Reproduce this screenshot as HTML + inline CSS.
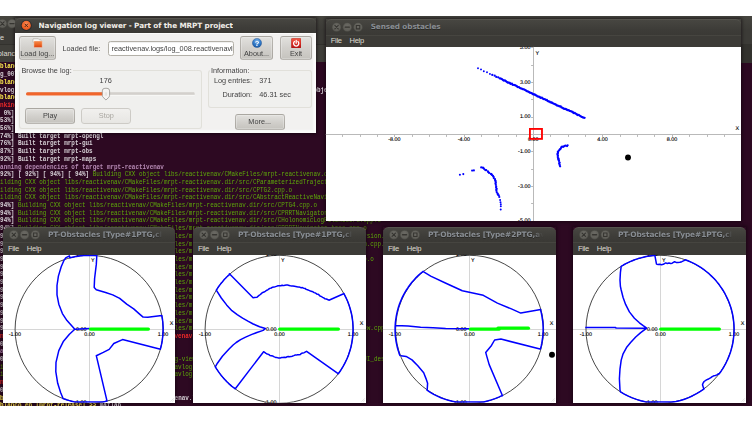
<!DOCTYPE html>
<html><head><meta charset="utf-8"><title>Navigation log viewer - Part of the MRPT project</title>
<style>
html,body{margin:0;padding:0;background:#fff}
body{width:752px;height:423px;overflow:hidden;position:relative;font-family:"Liberation Sans",sans-serif;font-size:7.3px;color:#424242}
#desk{position:absolute;left:0;top:16px;width:752px;height:389.8px;overflow:hidden;background:#2d0922}
#desk *{box-sizing:border-box}
#desk div,#desk span{position:absolute}
/* terminal */
#tterm{left:0;top:0;width:752px;height:46px;background:#3c3b37}
#tterm .t1{left:0;top:0;width:752px;height:14px;background:linear-gradient(#46453f,#3c3b37)}
#tterm .t3{left:0;top:28.2px;width:752px;height:17.8px;background:#403f3a;border-top:0.6px solid #33322e}
#tterm span{color:#dfdbd2;white-space:pre}
#term{left:-7.12px;top:0;width:1000px;height:389.8px;font-family:"Liberation Mono","DejaVu Sans Mono",monospace;font-size:7px;transform-origin:0 0;transform:scaleX(0.8475);white-space:pre}
#term .tl{left:0;height:7.7px;line-height:7.7px;white-space:pre}
#term .tl span{position:static}
.w{color:#d6d0d6;font-weight:bold}
.g{color:#5ea80a}
.y{color:#fce94f;font-weight:bold}
.r{color:#ef2929;font-weight:bold}
.m{color:#b68ab4;font-weight:bold}
.b{color:#729fcf;font-weight:bold}
/* windows */
.win{box-shadow:0 0 3px 1px rgba(10,0,8,.55)}
.tb{left:0;top:0;width:100%;border-radius:5.5px 5.5px 0 0;background:linear-gradient(#474641,#3d3c38 65%,#3a3935);border-top:0.7px solid #55544e}
.tb .tt{font-family:"DejaVu Sans","Liberation Sans",sans-serif;font-weight:bold;font-size:7.4px;letter-spacing:-0.08px;color:#dfdbd2;white-space:pre;overflow:hidden}
.tb.u .tt{color:#888d93;text-shadow:0 0.6px 0 rgba(20,20,18,.5)}
.mb{left:0;width:100%;background:#3c3b37;border-top:0.5px solid #464540}
.mb span{color:#dfdbd2;top:-0.8px;line-height:11px;white-space:pre;font-size:7.6px;letter-spacing:-0.3px}
.cv{left:0;width:100%;background:#fff;overflow:hidden}
.pl text{font-family:"Liberation Sans",sans-serif;font-size:5.4px;fill:#000;stroke:#000;stroke-width:0.12px;text-rendering:geometricPrecision}
/* main dialog */
#main{left:15px;top:1.7px;width:301px;height:115.3px}
#main .body{left:0;top:15.3px;width:301px;height:100px;background:#f2f1f0;border:2.2px solid #fbfbfa;border-top-width:1px;box-shadow:inset 1.2px 0 0 #f8f8f7,inset -1.2px 0 0 #f8f8f7,inset 0 -1.2px 0 #f8f8f7}
.btn{border:1px solid rgba(130,127,120,.42);border-radius:3px;background:linear-gradient(#e2e1de,#d2d0cc 50%,#c5c3be);box-shadow:inset 0 0 0 0.6px rgba(255,255,255,.45)}
.btn.dis{background:linear-gradient(#f1f0ee,#e7e6e3);border-color:#cdcbc6;color:#a9a6a0;box-shadow:none}
.btn span{left:0;width:100%;text-align:center;white-space:pre}
#main .bl{left:0;top:0;width:100%;height:100%;filter:blur(0.3px)}
.grp{border:1px solid rgba(214,211,205,.6);border-radius:3px;background:rgba(238,237,235,.35)}
.lbl{white-space:pre;line-height:9px;height:9px}
.glbl{background:#f2f1f0;padding:0 1px}
.entry{background:#fff;border:0.7px solid #b3b0a8;border-radius:2.4px;overflow:hidden;box-shadow:inset 0 0.6px 0.8px rgba(0,0,0,.12)}
</style></head>
<body>
<div id="desk">
<div id="tterm"><div class="t1"></div><span style="left:-7.6px;top:17px;line-height:9px">File</span><div class="t3"><div style="left:741px;top:0;width:11px;height:18px;background:#33322e"></div><span style="left:-5.5px;top:3.6px;line-height:9px">jlblanco@jlblanco-desktop: ~/code/mrpt-release</span></div></div>
<div id="term" style="top:0">
<div class="tl" style="top:47.45px"><span class="y">jlblanco en [mrpt-release] &gt;&gt; </span><span class="w">ls reactivenav.logs/</span></div>
<div class="tl" style="top:55.15px"><span class="w">log_007.reactivenavlog  log_008.reactivenavlog</span></div>
<div class="tl" style="top:62.85px"><span class="y">jlblanco en [mrpt-release] &gt;&gt; </span><span class="w">navlog-viewer reactivenav.logs/log_008.reactivenavlog</span></div>
<div class="tl" style="top:70.55px"><span class="w">navlog-viewer: error while loading shared libraries: libmrpt-gui.so.0: cannot open shared object file: No such file or directory</span></div>
<div class="tl" style="top:78.25px"><span class="y">jlblanco en [mrpt-release] &gt;&gt; </span><span class="w">make</span></div>
<div class="tl" style="top:85.95px"><span class="r">Linking CXX shared library ../../lib/libmrpt-base.so</span></div>
<div class="tl" style="top:93.65px"><span class="w">[  0%] Built target mrpt-base</span></div>
<div class="tl" style="top:101.35px"><span class="w">[ 53%] Built target mrpt-bayes</span></div>
<div class="tl" style="top:109.05px"><span class="w">[ 56%] Built target mrpt-scanmatching</span></div>
<div class="tl" style="top:116.75px"><span class="w">[ 74%] Built target mrpt-opengl</span></div>
<div class="tl" style="top:124.45px"><span class="w">[ 76%] Built target mrpt-gui</span></div>
<div class="tl" style="top:132.15px"><span class="w">[ 87%] Built target mrpt-obs</span></div>
<div class="tl" style="top:139.85px"><span class="w">[ 92%] Built target mrpt-maps</span></div>
<div class="tl" style="top:147.55px"><span class="m">Scanning dependencies of target mrpt-reactivenav</span></div>
<div class="tl" style="top:155.25px"><span class="w">[ 92%] [ 92%] [ 94%] [ 94%] </span><span class="g">Building CXX object libs/reactivenav/CMakeFiles/mrpt-reactivenav.dir/src/CLogFileRecord_ND.cpp.o</span></div>
<div class="tl" style="top:162.95px"><span class="g">Building CXX object libs/reactivenav/CMakeFiles/mrpt-reactivenav.dir/src/CParameterizedTrajectoryGenerator.cpp.o</span></div>
<div class="tl" style="top:170.65px"><span class="g">Building CXX object libs/reactivenav/CMakeFiles/mrpt-reactivenav.dir/src/CPTG2.cpp.o</span></div>
<div class="tl" style="top:178.35px"><span class="g">Building CXX object libs/reactivenav/CMakeFiles/mrpt-reactivenav.dir/src/CAbstractReactiveNavigationSystem.cpp.o</span></div>
<div class="tl" style="top:186.05px"><span class="w">[ 94%] </span><span class="g">Building CXX object libs/reactivenav/CMakeFiles/mrpt-reactivenav.dir/src/CPTG4.cpp.o</span></div>
<div class="tl" style="top:193.75px"><span class="w">[ 94%] </span><span class="g">Building CXX object libs/reactivenav/CMakeFiles/mrpt-reactivenav.dir/src/CPRRTNavigator.cpp.o</span></div>
<div class="tl" style="top:201.45px"><span class="w">[ 94%] </span><span class="g">Building CXX object libs/reactivenav/CMakeFiles/mrpt-reactivenav.dir/src/CHolonomicLogFileRecord.cpp.o</span></div>
<div class="tl" style="top:209.15px"><span class="w">[ 94%] </span><span class="g">Building CXX object libs/reactivenav/CMakeFiles/mrpt-reactivenav.dir/src/CPRRTNavigator_tree.cpp.o</span></div>
<div class="tl" style="top:216.85px"><span class="w">[ 94%] </span><span class="g">Building CXX object libs/reactivenav/CMakeFiles/mrpt-reactivenav.dir/src/mrpt_reactivenav_lib__version.cpp.o</span></div>
<div class="tl" style="top:224.55px"><span class="w">[ 96%] </span><span class="g">Building CXX object libs/reactivenav/CMakeFiles/mrpt-reactivenav.dir/src/CReactiveNavigationSystem.cpp.o</span></div>
<div class="tl" style="top:232.25px"><span class="w">[ 96%] </span><span class="g">Building CXX object libs/reactivenav/CMakeFiles/mrpt-reactivenav.dir/src/CPTG1.cpp.o</span></div>
<div class="tl" style="top:239.95px"><span class="w">[ 96%] </span><span class="g">Building CXX object libs/reactivenav/CMakeFiles/mrpt-reactivenav.dir/src/motion_planning_utils.cpp.o</span></div>
<div class="tl" style="top:247.65px"><span class="w">[ 96%] </span><span class="g">Building CXX object libs/reactivenav/CMakeFiles/mrpt-reactivenav.dir/src/CPTG3.cpp.o</span></div>
<div class="tl" style="top:255.35px"><span class="w">[ 96%] </span><span class="g">Building CXX object libs/reactivenav/CMakeFiles/mrpt-reactivenav.dir/src/CPTG5.cpp.o</span></div>
<div class="tl" style="top:263.05px"><span class="w">[ 98%] </span><span class="g">Building CXX object libs/reactivenav/CMakeFiles/mrpt-reactivenav.dir/src/CPTG6.cpp.o</span></div>
<div class="tl" style="top:270.75px"><span class="w">[ 98%] </span><span class="g">Building CXX object libs/reactivenav/CMakeFiles/mrpt-reactivenav.dir/src/CPTG7.cpp.o</span></div>
<div class="tl" style="top:278.45px"><span class="w">[ 98%] </span><span class="g">Building CXX object libs/reactivenav/CMakeFiles/mrpt-reactivenav.dir/src/CLogFileRecord.cpp.o</span></div>
<div class="tl" style="top:286.15px"><span class="w">[ 98%] </span><span class="g">Building CXX object libs/reactivenav/CMakeFiles/mrpt-reactivenav.dir/src/CHolonomicVFF.cpp.o</span></div>
<div class="tl" style="top:293.85px"><span class="w">[ 98%] </span><span class="g">Building CXX object libs/reactivenav/CMakeFiles/mrpt-reactivenav.dir/src/CHolonomicND.cpp.o</span></div>
<div class="tl" style="top:301.55px"><span class="w">[ 98%] </span><span class="g">Building CXX object libs/reactivenav/CMakeFiles/mrpt-reactivenav.dir/src/CLogFileRecord_VFF.cpp.o</span></div>
<div class="tl" style="top:309.25px"><span class="w">[ 98%] </span><span class="g">Building CXX object libs/reactivenav/CMakeFiles/mrpt-reactivenav.dir/src/CPRRTNavigator_window_view.cpp.o</span></div>
<div class="tl" style="top:316.95px"><span class="r">Linking CXX shared library ../../lib/libmrpt-reactivenav.so</span></div>
<div class="tl" style="top:324.65px"><span class="w">[100%] Built target mrpt-reactivenav</span></div>
<div class="tl" style="top:332.35px"><span class="m">Scanning dependencies of target navlog-viewer</span></div>
<div class="tl" style="top:340.05px"><span class="w">[100%] [100%] [100%] </span><span class="g">Building CXX object apps/navlog-viewer/CMakeFiles/navlog-viewer.dir/navlog_viewer_GUI_designMain.cpp.o</span></div>
<div class="tl" style="top:347.75px"><span class="g">Building CXX object apps/navlog-viewer/CMakeFiles/navlog-viewer.dir/navlog_viewerApp.cpp.o</span></div>
<div class="tl" style="top:355.45px"><span class="g">Building CXX object apps/navlog-viewer/CMakeFiles/navlog-viewer.dir/CAboutBox.cpp.o</span></div>
<div class="tl" style="top:363.15px"><span class="r">Linking CXX executable ../../bin/navlog-viewer</span></div>
<div class="tl" style="top:370.85px"><span class="w">[100%] Built target navlog-viewer</span></div>
<div class="tl" style="top:378.55px"><span class="y">jlblanco en [mrpt-release] &gt;&gt; </span><span class="w">navlog-viewer reactivenav.logs/log_008.reactivenavlog</span></div>
<div class="tl" style="top:386.25px"><span class="y">jlblanco en [mrpt-release] &gt;&gt; </span><span class="w">matlab</span></div>
</div>

<div class="win" id="sensed" style="left:325.5px;top:3.2px;width:415.5px;height:201.8px">
<div class="tb u" style="height:15.4px"><span class="tt" style="left:45.2px;top:-0.9px;line-height:15.6px;font-size:7.25px">Sensed obstacles</span></div>
<div class="mb" style="top:15.4px;height:12.2px"><span style="left:5.2px">File</span><span style="left:24.0px">Help</span></div>
<div class="cv" style="top:27.5px;height:174.3px"></div>
</div>

<div class="win" id="main">
<div class="tb" style="height:15.3px"><span class="tt" style="left:23.6px;top:0;line-height:13.6px;color:#f0ede7;font-size:7.25px">Navigation log viewer - Part of the MRPT project</span></div>
<div class="body"><div class="bl">
 <div class="btn" style="left:1.8px;top:2.2px;width:37px;height:24px">
  <svg style="position:absolute;left:12px;top:1px" width="12" height="11" viewBox="0 0 12 11"><defs><linearGradient id="fg" x1="0" y1="0" x2="0" y2="1"><stop offset="0" stop-color="#f58a4c"/><stop offset="0.5" stop-color="#ee6a28"/><stop offset="1" stop-color="#d8400f"/></linearGradient></defs><path d="M1.0 0.9h5.4l0.9 0.9h1.7v2.6H1.0z" fill="#ffffff" stroke="#a9a59b" stroke-width="0.6"/><rect x="1.9" y="3" width="8.3" height="6.5" rx="0.6" fill="url(#fg)" stroke="#f3d9c8" stroke-width="0.45"/></svg>
  <span style="top:12.3px;line-height:9px">Load log...</span></div>
 <span class="lbl" style="left:45.5px;top:10.0px">Loaded file:</span>
 <div class="entry" style="left:91.4px;top:7.1px;width:125.2px;height:14.6px"><span class="lbl" style="left:2.2px;top:2.3px">reactivenav.logs/log_008.reactivenavlog</span></div>
 <div class="btn" style="left:223.4px;top:2.2px;width:32.4px;height:24px">
  <svg style="position:absolute;left:10.8px;top:1.0px" width="10" height="10" viewBox="0 0 10 10"><defs><radialGradient id="qg" cx="50%" cy="30%" r="70%"><stop offset="0" stop-color="#7db4ea"/><stop offset="0.6" stop-color="#2f78c8"/><stop offset="1" stop-color="#1b57a0"/></radialGradient></defs><circle cx="5" cy="5" r="4.6" fill="url(#qg)" stroke="#1c4f8e" stroke-width="0.4"/><text x="5" y="7.7" text-anchor="middle" font-family="Liberation Sans, sans-serif" font-weight="bold" font-size="7.6" fill="#fff">?</text></svg>
  <span style="top:12.3px;line-height:9px">About...</span></div>
 <div class="btn" style="left:262.8px;top:2.2px;width:32.4px;height:24px">
  <svg style="position:absolute;left:10.0px;top:0.5px" width="10.4" height="10.4" viewBox="0 0 10.4 10.4"><defs><linearGradient id="eg" x1="0" y1="0" x2="0" y2="1"><stop offset="0" stop-color="#f25c44"/><stop offset="0.45" stop-color="#e2332b"/><stop offset="1" stop-color="#b31414"/></linearGradient></defs><rect x="0.3" y="0.3" width="9.8" height="9.8" rx="1.2" fill="url(#eg)" stroke="#a01515" stroke-width="0.4"/><path d="M3.5 3.5A2.6 2.6 0 1 0 6.9 3.5" fill="none" stroke="#fff" stroke-width="1.3" stroke-linecap="round"/><path d="M5.2 2.4V5.2" stroke="#fff" stroke-width="1.25" stroke-linecap="round"/></svg>
  <span style="top:12.3px;line-height:9px">Exit</span></div>

 <div class="grp" style="left:1.8px;top:36.2px;width:183px;height:59.2px"></div>
 <span class="lbl glbl" style="left:3.4px;top:32.4px">Browse the log:</span>
 <span class="lbl" style="left:82.6px;top:41.6px">176</span>
 <div class="btn" style="left:7.8px;top:74.3px;width:50.4px;height:15.6px"><span style="top:2.1px;line-height:9px">Play</span></div>
 <div class="btn dis" style="left:64.2px;top:74.3px;width:50.2px;height:15.6px"><span style="top:2.1px;line-height:9px">Stop</span></div>

 <div class="grp" style="left:191.2px;top:36.2px;width:103.7px;height:37.4px"></div>
 <span class="lbl glbl" style="left:192.9px;top:32.4px">Information:</span>
 <span class="lbl" style="left:196.9px;top:41.9px">Log entries:</span>
 <span class="lbl" style="left:242.3px;top:41.9px">371</span>
 <span class="lbl" style="left:205.5px;top:55.7px">Duration:</span>
 <span class="lbl" style="left:242.3px;top:55.7px">46.31 sec</span>
 <div class="btn" style="left:217.8px;top:80.2px;width:49.8px;height:15.4px"><span style="top:1.9px;line-height:9px">More...</span></div>
</div></div>
</div>

<div class="win pt" style="left:3px;top:211.3px;width:172px;height:175.5px">
<div class="tb u" style="height:15.2px"><span class="tt" style="left:45.0px;top:-0.9px;line-height:15.6px;width:116px;-webkit-mask-image:linear-gradient(90deg,#000 0,#000 105px,rgba(0,0,0,0.15) 113px,transparent 116px);mask-image:linear-gradient(90deg,#000 0,#000 105px,rgba(0,0,0,0.15) 113px,transparent 116px)">PT-Obstacles [Type#1PTG,cl</span></div>
<div class="mb" style="top:15.2px;height:12.3px"><span style="left:4.9px">File</span><span style="left:23.8px">Help</span></div>
<div class="cv" style="top:27.5px;height:148.0px"></div>
</div>
<div class="win pt" style="left:193px;top:211.3px;width:173px;height:175.5px">
<div class="tb u" style="height:15.2px"><span class="tt" style="left:45.0px;top:-0.9px;line-height:15.6px;width:116px;-webkit-mask-image:linear-gradient(90deg,#000 0,#000 105px,rgba(0,0,0,0.15) 113px,transparent 116px);mask-image:linear-gradient(90deg,#000 0,#000 105px,rgba(0,0,0,0.15) 113px,transparent 116px)">PT-Obstacles [Type#1PTG,cl</span></div>
<div class="mb" style="top:15.2px;height:12.3px"><span style="left:4.9px">File</span><span style="left:23.8px">Help</span></div>
<div class="cv" style="top:27.5px;height:148.0px"></div>
</div>
<div class="win pt" style="left:383px;top:211.3px;width:173px;height:175.5px">
<div class="tb u" style="height:15.2px"><span class="tt" style="left:45.0px;top:-0.9px;line-height:15.6px;width:116px;-webkit-mask-image:linear-gradient(90deg,#000 0,#000 105px,rgba(0,0,0,0.15) 113px,transparent 116px);mask-image:linear-gradient(90deg,#000 0,#000 105px,rgba(0,0,0,0.15) 113px,transparent 116px)">PT-Obstacles [Type#2PTG,av</span></div>
<div class="mb" style="top:15.2px;height:12.3px"><span style="left:4.9px">File</span><span style="left:23.8px">Help</span></div>
<div class="cv" style="top:27.5px;height:148.0px"></div>
</div>
<div class="win pt" style="left:573px;top:211.3px;width:173px;height:175.5px">
<div class="tb u" style="height:15.2px"><span class="tt" style="left:45.0px;top:-0.9px;line-height:15.6px;width:116px;-webkit-mask-image:linear-gradient(90deg,#000 0,#000 105px,rgba(0,0,0,0.15) 113px,transparent 116px);mask-image:linear-gradient(90deg,#000 0,#000 105px,rgba(0,0,0,0.15) 113px,transparent 116px)">PT-Obstacles [Type#1PTG,cl</span></div>
<div class="mb" style="top:15.2px;height:12.3px"><span style="left:4.9px">File</span><span style="left:23.8px">Help</span></div>
<div class="cv" style="top:27.5px;height:148.0px"></div>
</div>
<svg id="plots" width="752" height="390" viewBox="0 16 752 390" style="position:absolute;left:0;top:0">
<defs><radialGradient id="wbg" cx="50%" cy="35%" r="75%"><stop offset="0" stop-color="#6a6963"/><stop offset="1" stop-color="#5a5953"/></radialGradient>
<radialGradient id="wcg" cx="50%" cy="35%" r="75%"><stop offset="0" stop-color="#fa8a58"/><stop offset="0.55" stop-color="#f06428"/><stop offset="1" stop-color="#de4c18"/></radialGradient>
<clipPath id="cpt"><rect x="0" y="16" width="15" height="20"/></clipPath></defs>
<g clip-path="url(#cpt)"><g transform="translate(2.40 23.60)"><circle r="4.45" fill="url(#wbg)" stroke="#45443f" stroke-width="0.5"/><path d="M-1.7 -1.7L1.7 1.7M1.7 -1.7L-1.7 1.7" fill="none" stroke="#363531" stroke-width="1.1" stroke-linecap="round"/></g><g transform="translate(12.00 23.60)"><circle r="4.45" fill="url(#wbg)" stroke="#45443f" stroke-width="0.5"/><path d="M-2 0H2" fill="none" stroke="#363531" stroke-width="1.3" stroke-linecap="round"/></g></g>
<g transform="translate(336.55 27.15)"><circle r="4.45" fill="url(#wbg)" stroke="#45443f" stroke-width="0.5"/><path d="M-1.7 -1.7L1.7 1.7M1.7 -1.7L-1.7 1.7" fill="none" stroke="#363531" stroke-width="1.1" stroke-linecap="round"/></g><g transform="translate(347.30 27.15)"><circle r="4.45" fill="url(#wbg)" stroke="#45443f" stroke-width="0.5"/><path d="M-2 0H2" fill="none" stroke="#363531" stroke-width="1.3" stroke-linecap="round"/></g><g transform="translate(358.05 27.15)"><circle r="4.45" fill="url(#wbg)" stroke="#45443f" stroke-width="0.5"/><path d="M-1.7 -1.7h3.4v3.4h-3.4z" fill="none" stroke="#363531" stroke-width="1.05" stroke-linecap="round"/></g>
<g transform="translate(26.30 25.40)"><circle r="5.5" fill="#2a2c2e"/><circle r="4.55" fill="url(#wcg)"/><path d="M-1.3 -1.3L1.3 1.3M1.3 -1.3L-1.3 1.3" fill="none" stroke="#4a2414" stroke-width="0.95" stroke-linecap="round"/></g>
<rect x="26.2" y="92.6" width="168.6" height="2.6" rx="1.3" fill="#d9d7d3"/><rect x="26.6" y="92.6" width="167.8" height="0.8" rx="0.4" fill="#cdcac5"/><rect x="26.2" y="95.2" width="168.6" height="0.8" rx="0.4" fill="#fbfbfa"/>
<rect x="26.0" y="92.2" width="80" height="3.4" rx="1.7" fill="#f0652b"/>
<path d="M104.9 88.3h2.1a2.6 2.6 0 0 1 2.6 2.6v4.4q0 1.1-.8 2l-2.85 2.7l-2.85-2.7q-.8-.9-.8-2v-4.4a2.6 2.6 0 0 1 2.6-2.6z" fill="#f5f4f2" stroke="#8f8d88" stroke-width="0.75"/><path d="M105.3 92.3v3.4M106.6 92.3v3.4" stroke="#d3d0ca" stroke-width="0.5"/>
<g transform="translate(13.80 234.75)"><circle r="4.45" fill="url(#wbg)" stroke="#45443f" stroke-width="0.5"/><path d="M-1.7 -1.7L1.7 1.7M1.7 -1.7L-1.7 1.7" fill="none" stroke="#363531" stroke-width="1.1" stroke-linecap="round"/></g><g transform="translate(24.55 234.75)"><circle r="4.45" fill="url(#wbg)" stroke="#45443f" stroke-width="0.5"/><path d="M-2 0H2" fill="none" stroke="#363531" stroke-width="1.3" stroke-linecap="round"/></g><g transform="translate(35.30 234.75)"><circle r="4.45" fill="url(#wbg)" stroke="#45443f" stroke-width="0.5"/><path d="M-1.7 -1.7h3.4v3.4h-3.4z" fill="none" stroke="#363531" stroke-width="1.05" stroke-linecap="round"/></g><g transform="translate(203.80 234.75)"><circle r="4.45" fill="url(#wbg)" stroke="#45443f" stroke-width="0.5"/><path d="M-1.7 -1.7L1.7 1.7M1.7 -1.7L-1.7 1.7" fill="none" stroke="#363531" stroke-width="1.1" stroke-linecap="round"/></g><g transform="translate(214.55 234.75)"><circle r="4.45" fill="url(#wbg)" stroke="#45443f" stroke-width="0.5"/><path d="M-2 0H2" fill="none" stroke="#363531" stroke-width="1.3" stroke-linecap="round"/></g><g transform="translate(225.30 234.75)"><circle r="4.45" fill="url(#wbg)" stroke="#45443f" stroke-width="0.5"/><path d="M-1.7 -1.7h3.4v3.4h-3.4z" fill="none" stroke="#363531" stroke-width="1.05" stroke-linecap="round"/></g><g transform="translate(393.80 234.75)"><circle r="4.45" fill="url(#wbg)" stroke="#45443f" stroke-width="0.5"/><path d="M-1.7 -1.7L1.7 1.7M1.7 -1.7L-1.7 1.7" fill="none" stroke="#363531" stroke-width="1.1" stroke-linecap="round"/></g><g transform="translate(404.55 234.75)"><circle r="4.45" fill="url(#wbg)" stroke="#45443f" stroke-width="0.5"/><path d="M-2 0H2" fill="none" stroke="#363531" stroke-width="1.3" stroke-linecap="round"/></g><g transform="translate(415.30 234.75)"><circle r="4.45" fill="url(#wbg)" stroke="#45443f" stroke-width="0.5"/><path d="M-1.7 -1.7h3.4v3.4h-3.4z" fill="none" stroke="#363531" stroke-width="1.05" stroke-linecap="round"/></g><g transform="translate(583.80 234.75)"><circle r="4.45" fill="url(#wbg)" stroke="#45443f" stroke-width="0.5"/><path d="M-1.7 -1.7L1.7 1.7M1.7 -1.7L-1.7 1.7" fill="none" stroke="#363531" stroke-width="1.1" stroke-linecap="round"/></g><g transform="translate(594.55 234.75)"><circle r="4.45" fill="url(#wbg)" stroke="#45443f" stroke-width="0.5"/><path d="M-2 0H2" fill="none" stroke="#363531" stroke-width="1.3" stroke-linecap="round"/></g><g transform="translate(605.30 234.75)"><circle r="4.45" fill="url(#wbg)" stroke="#45443f" stroke-width="0.5"/><path d="M-1.7 -1.7h3.4v3.4h-3.4z" fill="none" stroke="#363531" stroke-width="1.05" stroke-linecap="round"/></g>
<clipPath id="cps"><rect x="325.5" y="46.7" width="415.5" height="174.3"/></clipPath>
<g clip-path="url(#cps)">
<path d="M325.5 134.5H741.0M533.5 46.7V221.0M342.5 134.5v2.4M360.5 134.5v2.4M377.5 134.5v2.4M394.5 134.5v2.4M412.5 134.5v2.4M429.5 134.5v2.4M446.5 134.5v2.4M464.5 134.5v2.4M481.5 134.5v2.4M498.5 134.5v2.4M516.5 134.5v2.4M550.5 134.5v2.4M568.5 134.5v2.4M585.5 134.5v2.4M602.5 134.5v2.4M620.5 134.5v2.4M637.5 134.5v2.4M654.5 134.5v2.4M672.5 134.5v2.4M689.5 134.5v2.4M707.5 134.5v2.4M724.5 134.5v2.4M533.5 203.5h-2.4M533.5 186.5h-2.4M533.5 169.5h-2.4M533.5 151.5h-2.4M533.5 117.5h-2.4M533.5 99.5h-2.4M533.5 82.5h-2.4M533.5 65.5h-2.4M533.5 47.5h-2.4" stroke="#b9b9b9" stroke-width="1" fill="none"/>
<g class="pl"><text x="394.4" y="140.9" text-anchor="middle">-8.00</text><text x="463.8" y="140.9" text-anchor="middle">-4.00</text><text x="602.6" y="140.9" text-anchor="middle">4.00</text><text x="672.0" y="140.9" text-anchor="middle">8.00</text><text x="533.2" y="140.9" text-anchor="middle">0.00</text><text x="530.4" y="49.0" text-anchor="end">5.00</text><text x="530.4" y="83.6" text-anchor="end">3.00</text><text x="530.4" y="118.4" text-anchor="end">1.00</text><text x="530.4" y="153.0" text-anchor="end">-1.00</text><text x="530.4" y="187.8" text-anchor="end">-3.00</text><text x="530.4" y="222.4" text-anchor="end">-5.00</text><text x="737.3" y="130.3" text-anchor="middle">X</text><text x="537.3" y="54.8" text-anchor="middle">Y</text></g>
<g fill="#0000ff"><circle cx="478.0" cy="68.2" r="0.95"/><circle cx="481.0" cy="69.4" r="0.95"/><circle cx="483.8" cy="71.2" r="0.95"/><circle cx="487.0" cy="72.2" r="0.95"/><circle cx="489.9" cy="73.9" r="0.95"/><circle cx="492.3" cy="74.9" r="1.15"/><circle cx="494.7" cy="75.7" r="1.15"/><circle cx="496.3" cy="76.9" r="1.15"/><circle cx="498.2" cy="77.3" r="1.15"/><circle cx="499.8" cy="78.4" r="1.15"/><circle cx="500.9" cy="78.6" r="1.15"/><circle cx="501.9" cy="79.1" r="1.15"/><circle cx="502.8" cy="79.8" r="1.15"/><circle cx="503.6" cy="80.6" r="1.15"/><circle cx="504.9" cy="80.5" r="1.15"/><circle cx="505.8" cy="81.1" r="1.15"/><circle cx="506.7" cy="81.8" r="1.15"/><circle cx="507.6" cy="82.5" r="1.15"/><circle cx="508.7" cy="82.7" r="1.15"/><circle cx="509.8" cy="83.0" r="1.15"/><circle cx="510.6" cy="83.9" r="1.15"/><circle cx="511.9" cy="83.7" r="1.15"/><circle cx="512.6" cy="84.8" r="1.15"/><circle cx="513.8" cy="84.8" r="1.15"/><circle cx="514.8" cy="85.2" r="1.15"/><circle cx="515.8" cy="85.6" r="1.15"/><circle cx="516.8" cy="86.2" r="1.15"/><circle cx="517.6" cy="87.1" r="1.15"/><circle cx="518.8" cy="87.1" r="1.15"/><circle cx="519.7" cy="87.8" r="1.15"/><circle cx="520.6" cy="88.3" r="1.15"/><circle cx="521.7" cy="88.6" r="1.15"/><circle cx="522.7" cy="89.2" r="1.15"/><circle cx="523.8" cy="89.3" r="1.15"/><circle cx="524.8" cy="89.8" r="1.15"/><circle cx="525.8" cy="90.3" r="1.15"/><circle cx="526.6" cy="91.1" r="1.15"/><circle cx="527.7" cy="91.4" r="1.15"/><circle cx="528.7" cy="91.8" r="1.15"/><circle cx="529.6" cy="92.5" r="1.15"/><circle cx="530.7" cy="92.8" r="1.15"/><circle cx="531.7" cy="93.2" r="1.15"/><circle cx="532.6" cy="94.0" r="1.15"/><circle cx="533.6" cy="94.4" r="1.15"/><circle cx="534.7" cy="94.5" r="1.15"/><circle cx="535.6" cy="95.2" r="1.15"/><circle cx="536.6" cy="95.7" r="1.15"/><circle cx="537.5" cy="96.4" r="1.15"/><circle cx="538.6" cy="96.7" r="1.15"/><circle cx="539.7" cy="96.9" r="1.15"/><circle cx="540.5" cy="97.9" r="1.15"/><circle cx="541.8" cy="97.7" r="1.15"/><circle cx="542.7" cy="98.4" r="1.15"/><circle cx="543.5" cy="99.1" r="1.15"/><circle cx="544.7" cy="99.1" r="1.15"/><circle cx="545.6" cy="99.8" r="1.15"/><circle cx="546.8" cy="100.0" r="1.15"/><circle cx="547.6" cy="100.9" r="1.15"/><circle cx="548.5" cy="101.4" r="1.15"/><circle cx="549.6" cy="101.7" r="1.15"/><circle cx="550.5" cy="102.4" r="1.15"/><circle cx="551.7" cy="102.5" r="1.15"/><circle cx="552.5" cy="103.2" r="1.15"/><circle cx="553.6" cy="103.6" r="1.15"/><circle cx="554.6" cy="104.1" r="1.15"/><circle cx="555.6" cy="104.4" r="1.15"/><circle cx="556.5" cy="105.2" r="1.15"/><circle cx="557.4" cy="105.7" r="1.15"/><circle cx="558.6" cy="105.8" r="1.15"/><circle cx="559.5" cy="106.4" r="1.15"/><circle cx="560.7" cy="106.5" r="1.15"/><circle cx="561.5" cy="107.4" r="1.15"/><circle cx="562.5" cy="107.8" r="1.15"/><circle cx="563.4" cy="108.5" r="1.15"/><circle cx="564.5" cy="108.9" r="1.15"/><circle cx="565.6" cy="109.0" r="1.15"/><circle cx="566.6" cy="109.5" r="1.15"/><circle cx="567.5" cy="110.2" r="1.15"/><circle cx="568.7" cy="110.2" r="1.15"/><circle cx="569.6" cy="110.9" r="1.15"/><circle cx="570.7" cy="111.2" r="1.15"/><circle cx="571.7" cy="111.6" r="1.15"/><circle cx="572.7" cy="112.0" r="1.15"/><circle cx="573.5" cy="113.0" r="1.15"/><circle cx="574.7" cy="113.0" r="1.15"/><circle cx="575.6" cy="113.6" r="1.15"/><circle cx="576.6" cy="114.1" r="1.15"/><circle cx="577.4" cy="115.0" r="1.15"/><circle cx="578.7" cy="114.8" r="1.15"/><circle cx="579.5" cy="115.6" r="1.15"/><circle cx="580.5" cy="116.1" r="1.15"/><circle cx="581.4" cy="116.8" r="1.15"/><circle cx="582.4" cy="117.2" r="1.15"/><circle cx="583.4" cy="117.7" r="1.15"/><circle cx="584.6" cy="117.8" r="1.15"/><circle cx="567.6" cy="145.3" r="1.15"/><circle cx="567.0" cy="146.1" r="1.15"/><circle cx="565.4" cy="145.7" r="1.15"/><circle cx="564.3" cy="146.1" r="1.15"/><circle cx="563.3" cy="146.8" r="1.15"/><circle cx="562.1" cy="146.7" r="1.15"/><circle cx="561.2" cy="147.5" r="1.15"/><circle cx="560.6" cy="148.8" r="1.15"/><circle cx="559.9" cy="149.3" r="1.15"/><circle cx="559.1" cy="150.4" r="1.15"/><circle cx="557.9" cy="151.6" r="1.15"/><circle cx="558.0" cy="152.8" r="1.15"/><circle cx="557.6" cy="153.6" r="1.15"/><circle cx="557.5" cy="154.6" r="1.15"/><circle cx="557.9" cy="155.7" r="1.15"/><circle cx="557.8" cy="157.1" r="1.15"/><circle cx="558.3" cy="158.4" r="1.15"/><circle cx="558.4" cy="159.0" r="1.15"/><circle cx="558.6" cy="160.0" r="1.15"/><circle cx="559.0" cy="160.9" r="1.15"/><circle cx="559.6" cy="162.6" r="1.15"/><circle cx="559.2" cy="163.5" r="1.15"/><circle cx="559.7" cy="164.9" r="1.15"/><circle cx="560.1" cy="166.3" r="1.15"/><circle cx="481.2" cy="167.4" r="1.1"/><circle cx="482.9" cy="167.7" r="1.1"/><circle cx="483.5" cy="168.1" r="1.1"/><circle cx="484.2" cy="169.0" r="1.1"/><circle cx="485.3" cy="170.1" r="1.1"/><circle cx="486.2" cy="170.2" r="1.1"/><circle cx="487.9" cy="171.3" r="1.1"/><circle cx="488.2" cy="172.1" r="1.1"/><circle cx="489.1" cy="172.9" r="1.1"/><circle cx="490.9" cy="173.9" r="1.1"/><circle cx="491.4" cy="174.2" r="1.1"/><circle cx="491.9" cy="174.9" r="1.1"/><circle cx="493.0" cy="175.9" r="1.1"/><circle cx="493.6" cy="176.8" r="1.1"/><circle cx="493.8" cy="178.1" r="1.1"/><circle cx="495.0" cy="179.2" r="1.1"/><circle cx="495.2" cy="180.4" r="1.1"/><circle cx="495.6" cy="181.2" r="1.1"/><circle cx="495.8" cy="182.6" r="1.1"/><circle cx="495.5" cy="183.4" r="1.1"/><circle cx="495.8" cy="184.8" r="1.1"/><circle cx="496.2" cy="186.4" r="1.1"/><circle cx="496.1" cy="187.5" r="1.1"/><circle cx="496.7" cy="188.8" r="1.1"/><circle cx="496.3" cy="189.5" r="1.1"/><circle cx="496.4" cy="190.8" r="1.1"/><circle cx="496.8" cy="192.3" r="1.1"/><circle cx="497.7" cy="193.6" r="1.1"/><circle cx="497.8" cy="194.6" r="1.1"/><circle cx="498.8" cy="195.4" r="1.1"/><circle cx="499.3" cy="197.0" r="1.1"/><circle cx="500.1" cy="200.1" r="1.0"/><circle cx="500.5" cy="202.2" r="1.0"/><circle cx="500.8" cy="204.2" r="1.0"/><circle cx="500.8" cy="206.3" r="1.0"/><circle cx="500.7" cy="209.6" r="1.0"/><circle cx="459.9" cy="174.7" r="1.05"/><circle cx="463.3" cy="174.1" r="1.05"/><circle cx="472.1" cy="170.6" r="1.05"/><circle cx="473.9" cy="170.4" r="1.05"/></g>
<rect x="529.93" y="128.93" width="12.05" height="9.95" fill="none" stroke="#ff0000" stroke-width="1.85"/>
<circle cx="628.0" cy="157.45" r="2.95" fill="#000"/>
</g>
<clipPath id="cp0"><rect x="3" y="254.8" width="172" height="148.0"/></clipPath><g clip-path="url(#cp0)">
<path d="M3 329.5H175M89.5 254.8V402.8" stroke="#d6d6d6" stroke-width="1" fill="none"/>
<circle cx="89.1" cy="329.3" r="74.0" fill="none" stroke="#181818" stroke-width="0.8"/>
<g class="pl">
<text x="14.9" y="335.9" text-anchor="middle">-1.00</text>
<text x="89.5" y="335.9" text-anchor="middle">0.00</text>
<text x="162.9" y="335.9" text-anchor="middle">1.00</text>
<text x="86.5" y="330.8" text-anchor="end">0.00</text>
<text x="86.5" y="256.4" text-anchor="end">1.00</text>
<text x="86.5" y="404.0" text-anchor="end">-1.00</text>
<text x="171.5" y="325.4" text-anchor="middle">X</text>
<text x="92.8" y="262.0" text-anchor="middle">Y</text>
</g>
<g transform="translate(89.5 329.5)">
<path d="M7.3 -74.0 L6.8 -65.1 L5.1 -51.0 L4.7 -42.1 L6.8 -39.8 L16.1 -37.0 L23.2 -34.6 L30.2 -31.1 L37.2 -25.3 L44.2 -20.6 L50.1 -15.4 L53.6 -12.4 L58.3 -12.2 L72.3 -14.0 L72.3 -14.0 L72.6 -12.4 L72.9 -10.7 L73.1 -9.0 L73.3 -7.3 L73.4 -5.6 L73.5 -3.9 L73.6 -2.2 L73.6 -0.5 L73.6 1.2 L73.5 2.9 L73.4 4.6 L73.3 6.3 L73.1 8.0 L72.9 9.7 L72.7 11.4 L72.4 13.0 L72.1 14.7 L71.7 16.4 L71.3 18.0 L70.9 19.7 L70.0 19.4 L33.0 10.1 L24.3 14.0 L19.7 19.9 L13.8 22.9 L6.8 26.2 L17.3 70.7 L17.5 71.6 L15.4 72.1 L13.2 72.5 L11.0 72.6 L8.8 72.6 L6.5 72.6 L4.3 72.6 L2.1 72.6 L-0.2 72.6 L-2.4 72.6 L-4.6 72.6 L-6.9 72.6 L-9.1 72.6 L-11.3 72.6 L-13.5 72.6 L-15.7 72.2 L-17.9 71.7 L-20.1 71.1 L-22.2 70.5 L-24.3 69.8 L-26.5 69.1 L-26.4 69.0 L-28.8 63.2 L-31.8 53.8 L-33.7 42.1 L-33.5 32.8 L-30.7 21.1 L-26.0 11.7 L-20.1 4.7 L-14.7 -0.2 L-17.8 -3.7 L-22.5 -8.9 L-27.1 -15.9 L-30.7 -25.3 L-32.5 -34.6 L-32.5 -44.0 L-31.1 -53.4 L-28.3 -62.7 L-25.7 -68.8 L-23.8 -71.7 L-20.1 -73.6 L-19.6 -71.7 L-18.3 -72.0 L-17.0 -72.3 L-15.6 -72.6 L-14.3 -72.9 L-13.0 -73.1 L-11.6 -73.3 L-10.3 -73.5 L-9.0 -73.7 L-7.6 -73.8 L-6.3 -74.0 L-4.9 -74.1 L-3.6 -74.1 L-2.2 -74.1 L-0.9 -74.1 L0.5 -74.1 L1.8 -74.1 L3.2 -74.1 L4.5 -74.0 L5.9 -73.9 L7.2 -73.8Z M-14.7 -0.2 L0.0 -0.9" fill="none" stroke="#0000ff" stroke-width="1.5" stroke-linejoin="round"/>
<line x1="1.0" y1="-0.4" x2="58.9" y2="-0.4" stroke="#00ff00" stroke-width="3.3" stroke-linecap="round"/>
</g>
<path d="M170.5 401.6L173.8 398.3M172.2 401.6L173.8 400.0" stroke="#d4d4d4" stroke-width="0.6"/>
</g>
<clipPath id="cp1"><rect x="193" y="254.8" width="173" height="148.0"/></clipPath><g clip-path="url(#cp1)">
<path d="M193 329.5H366M279.5 254.8V402.8" stroke="#d6d6d6" stroke-width="1" fill="none"/>
<circle cx="279.1" cy="329.3" r="74.0" fill="none" stroke="#181818" stroke-width="0.8"/>
<g class="pl">
<text x="204.9" y="335.9" text-anchor="middle">-1.00</text>
<text x="279.5" y="335.9" text-anchor="middle">0.00</text>
<text x="352.9" y="335.9" text-anchor="middle">1.00</text>
<text x="276.5" y="330.8" text-anchor="end">0.00</text>
<text x="276.5" y="256.4" text-anchor="end">1.00</text>
<text x="276.5" y="404.0" text-anchor="end">-1.00</text>
<text x="361.5" y="325.4" text-anchor="middle">X</text>
<text x="282.8" y="262.0" text-anchor="middle">Y</text>
</g>
<g transform="translate(279.5 329.5)">
<path d="M-14.1 -1.0 L-19.9 -2.8 L-26.3 -5.5 L-31.6 -8.3 L-36.9 -11.3 L-42.3 -14.8 L-47.6 -18.8 L-52.9 -24.6 L-58.2 -31.5 L-63.2 -39.4 L-63.2 -39.4 L-62.6 -40.3 L-62.0 -41.1 L-61.5 -42.0 L-60.9 -42.9 L-60.3 -43.7 L-59.6 -44.6 L-59.0 -45.4 L-58.4 -46.2 L-57.7 -47.0 L-57.0 -47.8 L-56.4 -48.6 L-55.7 -49.4 L-55.0 -50.2 L-54.2 -51.0 L-53.5 -51.7 L-52.8 -52.5 L-52.0 -53.2 L-51.3 -53.9 L-50.5 -54.6 L-49.8 -55.3 L-50.1 -55.7 L-26.4 -31.8 L-22.5 -32.3 L-21.3 -33.4 L-20.1 -34.3 L-19.1 -35.0 L-17.7 -36.4 L-16.7 -37.1 L-15.5 -37.4 L-14.3 -38.2 L-13.2 -39.0 L-11.8 -39.7 L-10.7 -40.5 L-9.7 -41.1 L-8.2 -41.5 L-6.9 -42.3 L-5.4 -42.4 L-3.9 -42.9 L-2.4 -43.4 L-1.1 -43.7 L0.2 -43.8 L1.3 -43.7 L2.7 -44.3 L4.1 -43.9 L5.4 -44.3 L6.8 -44.5 L8.2 -44.4 L9.6 -44.1 L10.9 -43.8 L12.3 -43.6 L13.4 -43.5 L15.0 -43.2 L16.2 -43.0 L17.4 -42.8 L18.8 -42.4 L20.0 -42.4 L21.7 -41.7 L22.9 -41.9 L24.1 -41.3 L25.6 -41.1 L26.7 -40.1 L28.0 -39.7 L29.5 -39.1 L31.0 -38.4 L32.4 -38.1 L33.4 -37.7 L34.7 -36.9 L36.0 -36.5 L37.1 -35.6 L38.5 -35.3 L39.7 -34.4 L40.7 -33.4 L41.9 -33.0 L43.1 -32.2 L44.3 -31.6 L45.5 -30.7 L46.9 -30.5 L48.0 -30.0 L49.4 -29.3 L64.1 -35.8 L64.4 -36.0 L66.3 -32.2 L68.1 -28.3 L69.6 -24.3 L70.8 -20.3 L71.9 -16.2 L72.7 -12.0 L73.2 -7.8 L73.5 -3.6 L73.6 0.7 L73.4 4.9 L73.0 9.2 L72.3 13.3 L71.5 17.5 L70.3 21.6 L69.0 25.6 L67.4 29.5 L65.5 33.4 L63.5 37.1 L61.3 40.7 L58.8 44.2 L58.3 43.8 L27.1 21.8 L26.0 22.4 L24.8 23.1 L23.5 23.6 L22.1 23.7 L20.9 24.9 L19.4 25.2 L18.1 25.2 L16.8 25.6 L15.4 25.6 L14.3 26.1 L12.7 26.7 L11.4 27.1 L10.0 27.2 L8.9 27.0 L7.4 27.3 L6.2 28.0 L4.9 27.8 L3.5 28.1 L2.2 28.1 L0.8 28.4 L-0.9 28.5 L-2.4 28.1 L-3.9 27.9 L-5.2 27.4 L-6.6 26.6 L-8.2 26.2 L-9.6 25.9 L-10.9 24.9 L-12.3 24.5 L-13.5 23.9 L-14.5 23.1 L-15.9 22.2 L-44.2 59.2 L-44.3 59.3 L-45.5 58.4 L-46.7 57.5 L-47.9 56.6 L-49.0 55.6 L-50.2 54.6 L-51.3 53.5 L-52.4 52.5 L-53.4 51.4 L-54.5 50.3 L-55.5 49.2 L-56.5 48.1 L-57.4 46.9 L-58.4 45.8 L-59.3 44.6 L-60.2 43.4 L-61.1 42.1 L-61.9 40.9 L-62.8 39.6 L-63.6 38.4 L-64.3 37.1 L-63.9 36.8 L-62.1 33.7 L-59.6 30.2 L-57.1 26.8 L-53.9 23.3 L-50.2 19.3 L-46.4 15.5 L-43.3 13.0 L-38.9 10.1 L-33.9 7.6 L-27.6 4.9 L-22.6 3.0 L-16.3 0.9 L-14.1 -1.0Z" fill="none" stroke="#0000ff" stroke-width="1.5" stroke-linejoin="round"/>
<line x1="0.2" y1="-0.4" x2="58.9" y2="-0.4" stroke="#00ff00" stroke-width="3.3" stroke-linecap="round"/>
</g>
<path d="M361.5 401.6L364.8 398.3M363.2 401.6L364.8 400.0" stroke="#d4d4d4" stroke-width="0.6"/>
</g>
<clipPath id="cp2"><rect x="383" y="254.8" width="173" height="148.0"/></clipPath><g clip-path="url(#cp2)">
<path d="M383 329.5H556M469.5 254.8V402.8" stroke="#d6d6d6" stroke-width="1" fill="none"/>
<circle cx="469.6" cy="329.3" r="74.0" fill="none" stroke="#181818" stroke-width="0.8"/>
<g class="pl">
<text x="394.9" y="335.9" text-anchor="middle">-1.00</text>
<text x="469.5" y="335.9" text-anchor="middle">0.00</text>
<text x="542.9" y="335.9" text-anchor="middle">1.00</text>
<text x="466.5" y="330.8" text-anchor="end">0.00</text>
<text x="466.5" y="256.4" text-anchor="end">1.00</text>
<text x="466.5" y="404.0" text-anchor="end">-1.00</text>
<text x="551.5" y="325.4" text-anchor="middle">X</text>
<text x="472.8" y="262.0" text-anchor="middle">Y</text>
</g>
<g transform="translate(469.5 329.5)">
<path d="M0.0 -0.7 L-23.8 -1.0 L-36.4 -1.7 L-48.9 -2.2 L-61.4 -3.5 L-74.0 -3.9 L-74.3 -3.9 L-74.1 -7.1 L-73.7 -10.2 L-73.2 -13.3 L-72.6 -16.4 L-71.9 -19.4 L-71.0 -22.5 L-70.0 -25.4 L-68.8 -28.4 L-67.6 -31.3 L-66.2 -34.1 L-64.7 -36.8 L-63.1 -39.5 L-61.3 -42.2 L-59.5 -44.7 L-57.6 -47.2 L-55.5 -49.6 L-53.4 -51.9 L-51.1 -54.1 L-48.8 -56.2 L-46.3 -58.2 L-45.8 -57.6 L-38.8 -53.4 L-23.6 -46.3 L-7.2 -38.8 L13.8 -34.2 L27.9 -26.4 L41.9 -20.6 L51.3 -16.4 L71.2 -20.1 L70.9 -20.0 L71.4 -18.1 L71.9 -16.2 L72.3 -14.2 L72.6 -12.2 L72.9 -10.2 L73.2 -8.3 L73.4 -6.3 L73.5 -4.3 L73.6 -2.3 L73.6 -0.3 L73.6 1.8 L73.5 3.8 L73.4 5.8 L73.2 7.8 L72.9 9.7 L72.6 11.7 L72.3 13.7 L71.9 15.7 L71.4 17.6 L70.9 19.5 L70.5 19.4 L31.4 9.6 L25.1 10.5 L22.0 15.9 L16.2 22.9 L17.3 26.9 L19.7 35.1 L33.0 66.2 L32.9 65.9 L29.3 67.6 L25.6 69.1 L21.8 70.4 L18.0 71.5 L14.2 72.4 L10.3 72.6 L6.3 72.6 L2.4 72.6 L-1.6 72.6 L-5.6 72.6 L-9.5 72.6 L-13.4 72.6 L-17.3 71.8 L-21.1 70.8 L-24.9 69.6 L-28.6 68.2 L-32.2 66.6 L-35.8 64.8 L-39.2 62.8 L-42.5 60.6 L-42.3 60.4 L-41.9 53.8 L-43.5 49.1 L-45.8 43.3 L-51.7 36.3 L-57.5 30.4 L-63.4 26.9 L-68.5 26.2 M-69.4 26.5 L-69.9 25.1 L-70.5 23.6 L-70.9 22.1 L-71.4 20.7 L-71.8 19.2 L-72.2 17.7 L-72.6 16.1 L-72.9 14.6 L-73.2 13.1 L-73.5 11.6 L-73.7 10.0 L-73.9 8.5 L-74.1 6.9 L-74.2 5.4 L-74.3 3.9 L-74.4 2.3 L-74.4 0.7 L-74.4 -0.8 L-74.4 -2.4 L-74.3 -3.9" fill="none" stroke="#0000ff" stroke-width="1.5" stroke-linejoin="round"/>
<line x1="1.0" y1="-0.3" x2="29.5" y2="-0.3" stroke="#00ff00" stroke-width="3.3" stroke-linecap="round"/><line x1="28.5" y1="-1.3" x2="58.9" y2="-1.3" stroke="#00ff00" stroke-width="3.3" stroke-linecap="round"/>
</g>
<path d="M551.5 401.6L554.8 398.3M553.2 401.6L554.8 400.0" stroke="#d4d4d4" stroke-width="0.6"/>
</g>
<clipPath id="cp3"><rect x="573" y="254.8" width="173" height="148.0"/></clipPath><g clip-path="url(#cp3)">
<path d="M573 329.5H746M660.5 254.8V402.8" stroke="#d6d6d6" stroke-width="1" fill="none"/>
<circle cx="660.0" cy="329.3" r="74.0" fill="none" stroke="#181818" stroke-width="0.8"/>
<g class="pl">
<text x="585.9" y="335.9" text-anchor="middle">-1.00</text>
<text x="660.5" y="335.9" text-anchor="middle">0.00</text>
<text x="733.9" y="335.9" text-anchor="middle">1.00</text>
<text x="657.5" y="330.8" text-anchor="end">0.00</text>
<text x="657.5" y="256.4" text-anchor="end">1.00</text>
<text x="657.5" y="404.0" text-anchor="end">-1.00</text>
<text x="742.5" y="325.4" text-anchor="middle">X</text>
<text x="663.8" y="262.0" text-anchor="middle">Y</text>
</g>
<g transform="translate(660.5 329.5)">
<path d="M-13.8 -1.3 L-17.3 -3.8 L-21.1 -6.7 L-26.1 -11.3 L-31.1 -17.6 L-34.9 -25.1 L-37.4 -32.0 L-39.3 -39.5 L-40.1 -43.2 L-40.5 -49.4 L-40.1 -56.9 L-39.3 -63.2 L-39.3 -63.2 L-37.7 -64.1 L-36.2 -65.0 L-34.6 -65.8 L-33.0 -66.6 L-31.4 -67.4 L-29.8 -68.1 L-28.1 -68.8 L-26.5 -69.5 L-24.8 -70.1 L-23.1 -70.6 L-21.4 -71.2 L-19.7 -71.6 L-18.0 -72.1 L-16.2 -72.5 L-14.5 -72.9 L-12.7 -73.2 L-10.9 -73.4 L-9.2 -73.7 L-7.4 -73.9 L-5.6 -74.0 L-5.6 -73.8 L-4.0 -65.4 L-2.4 -64.9 L-0.8 -65.2 L1.0 -64.8 L2.8 -65.2 L5.2 -66.6 L6.8 -66.0 L8.5 -66.4 L10.2 -66.0 L11.7 -66.3 L14.1 -67.8 L15.6 -67.1 L17.3 -67.0 L19.4 -67.2 L21.3 -67.8 L24.6 -69.4 L24.7 -69.8 L28.0 -68.5 L31.1 -67.1 L34.2 -65.6 L37.3 -63.9 L40.2 -62.1 L43.1 -60.1 L45.8 -58.0 L48.5 -55.8 L51.0 -53.4 L53.5 -51.0 L55.8 -48.4 L58.0 -45.7 L60.0 -42.9 L62.0 -40.0 L63.8 -37.1 L65.4 -34.0 L66.9 -30.9 L68.3 -27.7 L69.5 -24.5 L70.6 -21.2 L71.5 -17.8 L72.2 -14.5 L72.8 -11.0 L73.2 -7.6 L73.5 -4.1 L73.6 -0.7 L73.5 2.8 L73.3 6.2 L72.9 9.7 L72.4 13.1 L71.7 16.5 L70.8 19.9 L69.8 23.2 L68.6 26.4 L67.3 29.6 L65.8 32.8 L64.2 35.8 L62.5 38.8 L60.6 41.7 L58.5 44.5 L58.1 44.2 L56.4 45.4 L54.9 46.0 L53.2 46.3 L51.7 47.1 L50.0 48.4 L48.5 49.2 L46.0 50.4 L43.6 52.0 L42.6 53.6 L42.0 55.3 L43.0 58.5 L43.6 59.3 L39.9 61.8 L36.1 64.1 L32.2 66.2 L28.2 68.1 L24.0 69.7 L19.8 71.0 L15.5 72.1 L11.1 72.6 L6.7 72.6 L2.3 72.6 L-2.2 72.6 L-6.6 72.6 L-11.0 72.6 L-15.4 72.3 L-19.7 71.2 L-24.0 69.9 L-28.2 68.4 L-32.2 66.6 L-36.2 64.6 L-40.0 62.3 L-40.0 62.3 L-40.5 60.6 L-41.1 49.3 L-40.5 39.3 L-39.3 30.6 L-37.4 24.3 L-33.6 17.4 L-29.9 13.1 L-24.8 7.5 L-19.8 3.1 L-13.8 -1.3Z M-13.8 -1.3 L-44.4 -1.4 L-44.9 -1.9 L-75.2 -1.9" fill="none" stroke="#0000ff" stroke-width="1.5" stroke-linejoin="round"/>
<line x1="0.2" y1="-0.4" x2="58.9" y2="-0.4" stroke="#00ff00" stroke-width="3.3" stroke-linecap="round"/>
</g>
<path d="M741.5 401.6L744.8 398.3M743.2 401.6L744.8 400.0" stroke="#d4d4d4" stroke-width="0.6"/>
</g>
<circle cx="552.0" cy="354.8" r="2.95" fill="#000"/>
</svg>
</div>
</body></html>
